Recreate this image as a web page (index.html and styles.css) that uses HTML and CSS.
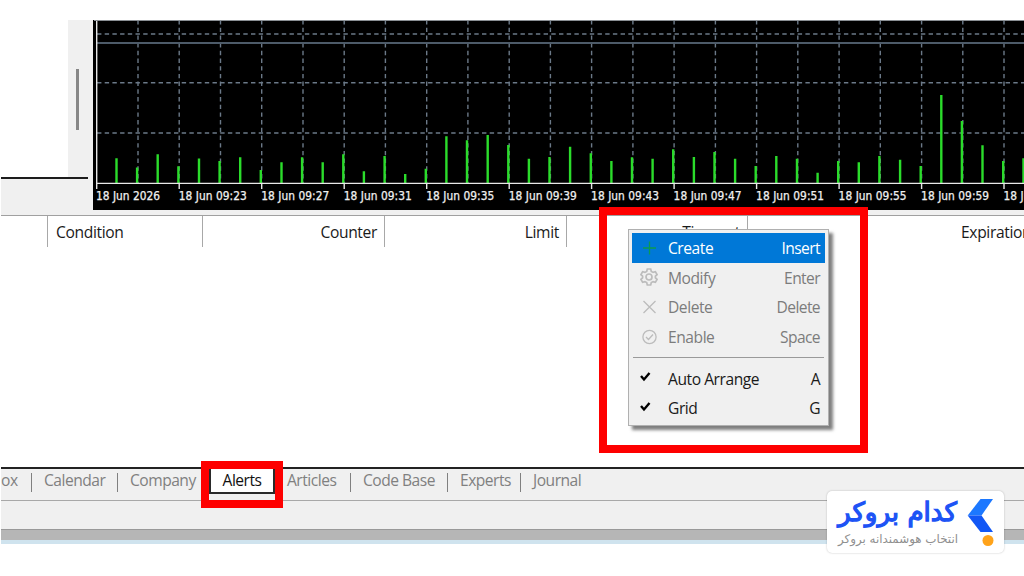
FILE: index.html
```html
<!DOCTYPE html>
<html lang="en">
<head>
<meta charset="UTF-8" />
<meta name="viewport" content="width=device-width, initial-scale=1" />
<title>Toolbox - Alerts</title>
<link rel="stylesheet" href="styles.css">
</head>
<body>

<div class="terminal">

  <section class="workspace">
    <div class="side">
      <div class="side-top">
        <div class="side-list"></div>
        <div class="scrollbar"><span class="thumb"></span></div>
      </div>
    </div>
    <svg class="chart" viewBox="93 20 931 190" width="931" height="190">
      <path class="grid-line" d="M97 34H1024M97 82.7H1024M97 133H1024" />
      <path class="grid-line" d="M138 20V183M179.2 20V183M220.5 20V183M261.7 20V183M303 20V183M344.2 20V183M385.4 20V183M426.7 20V183M467.9 20V183M509.2 20V183M550.4 20V183M591.6 20V183M632.9 20V183M674.1 20V183M715.4 20V183M756.6 20V183M797.8 20V183M839.1 20V183M880.3 20V183M921.6 20V183M962.8 20V183M1004 20V183" />
      <path class="price-line" d="M97 43H1024" />
      <path class="volume" d="M116.5 183V158.3M137.1 183V167.5M157.7 183V154.3M178.4 183V166.3M199 183V158.5M219.6 183V161M240.2 183V157.3M260.8 183V170M281.5 183V162.3M302.1 183V157.3M322.7 183V162.3M343.3 183V154.3M363.9 183V171.3M384.6 183V156M405.2 183V174M425.8 183V168.7M446.4 183V136.3M467 183V140.3M487.7 183V135M508.3 183V145M528.9 183V158.7M549.5 183V157M570.1 183V146.7M590.8 183V153.3M611.4 183V161M632 183V157.3M652.6 183V158.7M673.2 183V149.3M693.9 183V157M714.5 183V152M735.1 183V158.7M755.7 183V166M776.3 183V156M797 183V158.7M817.6 183V172.7M838.2 183V161M858.8 183V162.3M879.4 183V156M900.1 183V159.7M920.7 183V166M941.3 183V95M961.9 183V121M982.5 183V145.3M1003.2 183V161M1023.5 183V158.3" />
      <path class="axis" d="M96.7 20V189M96 183.4H1024M179.2 183V189M261.7 183V189M344.2 183V189M426.7 183V189M509.2 183V189M591.6 183V189M674.1 183V189M756.6 183V189M839.1 183V189M921.6 183V189M1004 183V189" />
      <path class="chart-top" d="M94 20.5H1024" />
      <g class="dates">
        <text x="96" y="199.5" textLength="64">18 Jun 2026</text>
        <text x="178.7" y="199.5" textLength="68">18 Jun 09:23</text>
        <text x="261.2" y="199.5" textLength="68">18 Jun 09:27</text>
        <text x="343.7" y="199.5" textLength="68">18 Jun 09:31</text>
        <text x="426.2" y="199.5" textLength="68">18 Jun 09:35</text>
        <text x="508.7" y="199.5" textLength="68">18 Jun 09:39</text>
        <text x="591.1" y="199.5" textLength="68">18 Jun 09:43</text>
        <text x="673.6" y="199.5" textLength="68">18 Jun 09:47</text>
        <text x="756.1" y="199.5" textLength="68">18 Jun 09:51</text>
        <text x="838.6" y="199.5" textLength="68">18 Jun 09:55</text>
        <text x="921.1" y="199.5" textLength="68">18 Jun 09:59</text>
        <text x="1003.5" y="199.5" textLength="68">18 Jun 10:03</text>
      </g>
    </svg>
  </section>

  <section class="alerts">
    <div class="columns">
      <div class="col col-symbol"></div>
      <div class="col col-condition">Condition</div>
      <div class="col col-counter">Counter</div>
      <div class="col col-limit">Limit</div>
      <div class="col col-timeout">Timeout</div>
      <div class="col col-expiration">Expiration</div>
    </div>
  </section>

  <nav class="tabs">
    <span class="tab tab-mailbox">ox</span>
    <span class="tab tab-calendar">Calendar</span>
    <span class="tab tab-company">Company</span>
    <span class="tab tab-active">Alerts</span>
    <span class="tab tab-articles">Articles</span>
    <span class="tab tab-code">Code Base</span>
    <span class="tab tab-experts">Experts</span>
    <span class="tab tab-journal">Journal</span>
  </nav>

  <div class="status-bar"></div>
  <div class="window-edge"></div>
  <div class="desktop-strip"></div>
</div>

<!-- Context menu -->
<div class="menu">
  <div class="menu-item selected">
    <svg class="icon" viewBox="0 0 18 18"><path d="M9.5 2.5V15.5M3 9H16" stroke="#0c9a50" /></svg>
    <span>Create</span><kbd>Insert</kbd>
  </div>
  <div class="menu-item disabled">
    <svg class="icon gear" viewBox="0 0 18 18"><path d="M7.3 1H10.7L11.3 3.4L13.1 4.4L15.4 3.7L17.1 6.6L15.4 8.2V9.8L17.1 11.4L15.4 14.3L13.1 13.6L11.3 14.6L10.7 17H7.3L6.7 14.6L4.9 13.6L2.6 14.3L.9 11.4L2.6 9.8V8.2L.9 6.6L2.6 3.7L4.9 4.4L6.7 3.4Z" /><circle cx="9" cy="9" r="3" /></svg>
    <span>Modify</span><kbd>Enter</kbd>
  </div>
  <div class="menu-item disabled">
    <svg class="icon" viewBox="0 0 18 18"><path d="M3.5 3L15.5 15M15.5 3L3.5 15" /></svg>
    <span>Delete</span><kbd>Delete</kbd>
  </div>
  <div class="menu-item disabled">
    <svg class="icon" viewBox="0 0 18 18"><circle cx="9.5" cy="9" r="6.6" /><path d="M6 9L8.5 11.5L13 6.5" /></svg>
    <span>Enable</span><kbd>Space</kbd>
  </div>
  <hr>
  <div class="menu-item">
    <svg class="icon check" viewBox="0 0 18 18"><path d="M1 7L4 10.5L9.5 4" /></svg>
    <span>Auto Arrange</span><kbd>A</kbd>
  </div>
  <div class="menu-item">
    <svg class="icon check" viewBox="0 0 18 18"><path d="M1 7L4 10.5L9.5 4" /></svg>
    <span>Grid</span><kbd>G</kbd>
  </div>
</div>

<!-- Highlights -->
<div class="mark mark-menu"></div>
<div class="mark mark-tab"></div>

<div class="brand">
  <svg viewBox="827 491 177 62" width="177" height="62">
    <text class="brand-name" x="897.5" y="521" text-anchor="middle" textLength="119" lengthAdjust="spacingAndGlyphs">کدام بروکر</text>
    <text class="brand-tag" x="898" y="542.5" text-anchor="middle" textLength="120" lengthAdjust="spacingAndGlyphs">انتخاب هوشمندانه بروکر</text>
    <path d="M980.5 499H993L981.5 515.5H967.7Z" fill="#1c78ff" />
    <path d="M967.7 515.5H981.5L993 532H980.5Z" fill="#1257f5" />
    <circle cx="988" cy="540.5" r="5.5" fill="#ffa31a" />
  </svg>
</div>

</body>
</html>
```
FILE: styles.css
```css
* {
  box-sizing: border-box;
}
body {
  margin: 0;
  height: 576px;
  overflow: hidden;
  position: relative;
  background: #fff;
  color: #1a1a1a;
  font-family: "Open Sans", "Noto Sans", sans-serif;
  font-size: 15.6px;
}
.terminal {
  padding: 20px 0 0 1px;
}

/* Chart */
.workspace {
  display: flex;
  height: 196px;
  background: #f0f0f0;
  border-bottom: 1px solid #a0a0a0;
}
.side {
  width: 92px;
}
.side-top {
  display: flex;
  width: 87px;
  height: 159px;
  border-bottom: 2px solid #1c1c1c;
}
.side-list {
  width: 67px;
  background: #fff;
}
.scrollbar {
  padding: 49px 0 0 8px;
}
.thumb {
  display: block;
  width: 3px;
  height: 61px;
  background: #868686;
}
.chart {
  display: block;
  background: #000;
}
.chart path {
  fill: none;
}
.grid-line {
  stroke: #6b7988;
  stroke-width: 1.4;
  stroke-dasharray: 4.4 3.3;
}
.chart .price-line {
  stroke: #4d5b69;
  stroke-width: 2;
}
.volume {
  stroke: #2bdc2b;
  stroke-width: 2.4;
}
.axis {
  stroke: #e8e8e8;
  stroke-width: 1.4;
}
.chart-top {
  stroke: #8a8f94;
}
.dates text {
  fill: #f0f0f0;
  stroke: #f0f0f0;
  stroke-width: 0.25;
  font-family: "DejaVu Sans Condensed", "DejaVu Sans", sans-serif;
  font-size: 11.8px;
}

/* Alerts table */
.alerts {
  height: 251px;
}
.columns {
  display: flex;
  height: 31px;
  overflow: hidden;
}
.col {
  flex: none;
  border-right: 1px solid #a8a8a8;
  padding: 0 7px 0 8px;
  line-height: 33px;
  text-align: right;
  letter-spacing: -0.35px;
}
.col-symbol {
  width: 47px;
}
.col-condition {
  width: 155px;
  text-align: left;
}
.col-counter,
.col-limit {
  width: 182px;
}
.col-timeout {
  width: 181px;
}
.col-expiration {
  width: 290px;
  border: none;
  text-align: left;
  padding-left: 213px;
}

/* Tabs */
.tabs {
  display: flex;
  height: 34px;
  background: #f0f0f0;
  border-top: 2px solid #222;
  border-bottom: 1px solid #a8a8a8;
  color: #808080;
  letter-spacing: -0.5px;
}
.tab {
  height: 25px;
  line-height: 22px;
  padding-left: 12px;
  white-space: nowrap;
}
.tab-mailbox,
.tab-calendar,
.tab-articles,
.tab-code,
.tab-experts {
  background: linear-gradient(#808080, #808080) right 4px / 1.5px 19px no-repeat;
}
.tab-mailbox {
  width: 31px;
  padding-left: 0;
}
.tab-calendar {
  width: 86px;
}
.tab-company {
  width: 91px;
}
.tab-active {
  width: 66px;
  background: #fff;
  border: 2px solid #2a2a2a;
  border-top: none;
  color: #111;
  text-align: center;
  padding: 0;
}
.tab-articles {
  width: 76px;
}
.tab-code {
  width: 97px;
}
.tab-experts {
  width: 73px;
}

.status-bar {
  height: 28px;
  background: #f0f0f0;
}
.window-edge {
  height: 11px;
  background: #b6b6b6;
  border-top: 1px solid #999;
}
.desktop-strip {
  height: 4px;
  background: #cfe3ee;
}

/* Context menu */
.menu {
  position: absolute;
  left: 628px;
  top: 229px;
  width: 201px;
  height: 197px;
  padding: 3px;
  background: #f0f0f0;
  border: 1px solid #b0b0b0;
  box-shadow: 4px 4px 3px rgba(0, 0, 0, 0.5);
  letter-spacing: -0.45px;
}
.menu-item {
  display: flex;
  align-items: center;
  height: 29.6px;
  padding: 0 5px 0 8px;
}
.menu-item span,
.menu-item kbd {
  line-height: 22px;
  padding-top: 1px;
}
.menu-item kbd {
  margin-left: auto;
  font-family: inherit;
  font-size: inherit;
  letter-spacing: -0.6px;
}
.icon {
  width: 18px;
  height: 18px;
  margin-right: 10px;
  fill: none;
  stroke: #bcbcbc;
  stroke-width: 1.3;
}
.gear {
  stroke-width: 1.7;
}
.check {
  stroke: #000;
  stroke-width: 2.4;
}
.selected {
  background: #0078d7;
  color: #fff;
}
.disabled {
  color: #7c7c7c;
}
.menu hr {
  margin: 5.6px 1px 5.4px;
  border: none;
  border-top: 1px solid #9a9a9a;
}

/* Red frames */
.mark {
  position: absolute;
  border: 8px solid #fe0000;
}
.mark-menu {
  left: 599px;
  top: 207px;
  width: 269px;
  height: 246px;
}
.mark-tab {
  left: 201px;
  top: 461px;
  width: 82px;
  height: 47px;
}

/* Brand badge */
.brand {
  position: absolute;
  left: 827px;
  top: 491px;
  width: 177px;
  height: 62px;
  background: #fff;
  border-radius: 5px;
  box-shadow: 0 0 2px rgba(0, 0, 0, 0.25);
}
.brand svg {
  display: block;
}
.brand-name {
  fill: #1d53f5;
  stroke: #1d53f5;
  stroke-width: 1.3;
  font-family: "DejaVu Sans", sans-serif;
  font-size: 26px;
}
.brand-tag {
  fill: #8f8f8f;
  font-family: "DejaVu Sans", sans-serif;
  font-size: 12px;
}
```
